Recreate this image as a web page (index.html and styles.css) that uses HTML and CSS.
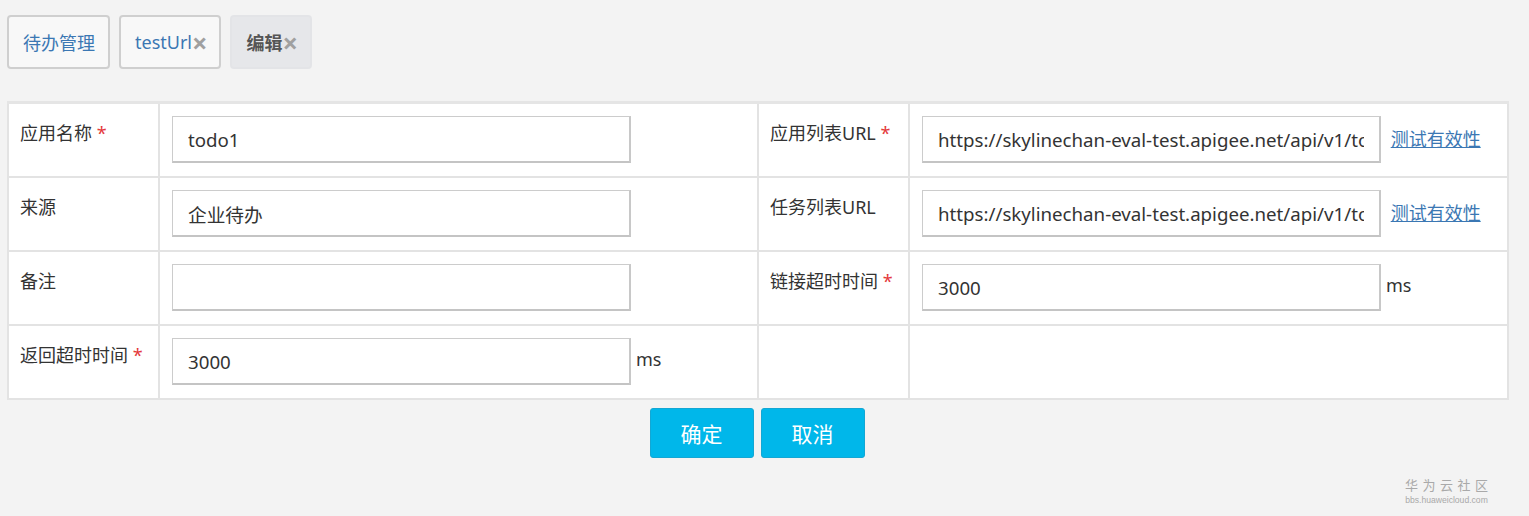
FILE: index.html
```html
<!DOCTYPE html>
<html>
<head>
    <title>编辑</title>
    <link rel="stylesheet" href="styles.css">
</head>
<body>
<div class="page">
    <nav class="tabs">
        <a class="tab">待办管理</a>
        <a class="tab">testUrl<span class="close">×</span></a>
        <a class="tab active">编辑<span class="close">×</span></a>
    </nav>

    <form class="edit-form">
        <table class="form-table">
            <colgroup>
                <col class="col-label">
                <col class="col-field">
                <col class="col-label">
                <col class="col-field">
            </colgroup>
            <tr>
                <th>应用名称 <span class="req">*</span></th>
                <td><input type="text" value="todo1"></td>
                <th>应用列表URL <span class="req">*</span></th>
                <td>
                    <input type="text" value="https://skylinechan-eval-test.apigee.net/api/v1/todo/apps">
                    <a class="check-link">测试有效性</a>
                </td>
            </tr>
            <tr>
                <th>来源</th>
                <td><input type="text" value="企业待办"></td>
                <th>任务列表URL</th>
                <td>
                    <input type="text" value="https://skylinechan-eval-test.apigee.net/api/v1/todo/tasks">
                    <a class="check-link">测试有效性</a>
                </td>
            </tr>
            <tr>
                <th>备注</th>
                <td><input type="text" value=""></td>
                <th>链接超时时间 <span class="req">*</span></th>
                <td><input type="text" value="3000"><span class="unit">ms</span></td>
            </tr>
            <tr>
                <th>返回超时时间 <span class="req">*</span></th>
                <td><input type="text" value="3000"><span class="unit">ms</span></td>
                <th></th>
                <td></td>
            </tr>
        </table>

        <div class="actions">
            <button type="button" class="btn">确定</button>
            <button type="button" class="btn">取消</button>
        </div>
    </form>
</div>

<div class="watermark">
    <div class="wm-title">华为云社区</div>
    <div class="wm-url">bbs.huaweicloud.com</div>
</div>
</body>
</html>
```

FILE: styles.css
```css
:root {
    --bg-color: #f3f3f3;
    --text-color: #333333;
    --border-color: #e3e3e3;
    --input-border: #cccccc;
    --link-color: #3b77b3;
    --primary-color: #00b7ea;
    --primary-border: #13a7d4;
    --required-color: #e4393c;
}

body {
    margin: 0;
    background-color: var(--bg-color);
    color: var(--text-color);
    font-family: "Noto Sans", "Noto Sans CJK SC", sans-serif;
    font-size: 18px;
}

.page {
    padding: 15px 22px 0 7px;
}

/* tabs */
.tabs {
    display: flex;
    gap: 9px;
    height: 54px;
}

.tab {
    display: flex;
    align-items: center;
    padding: 0 13px 0 14px;
    border: 2px solid #cfcfcf;
    border-radius: 4px;
    background-color: #f8f8f8;
    color: var(--link-color);
    font-size: 18px;
    box-sizing: border-box;
}

.tab .close {
    color: #a0a0a0;
    font-size: 27px;
    font-weight: bold;
    line-height: 1;
    margin-top: 1px;
    margin-right: -1px;
}

.tab.active {
    border-color: #e3e4e7;
    background-color: #e6e7ea;
    color: #555;
    font-weight: bold;
}

/* form table */
.edit-form {
    margin-top: 32px;
}

.form-table {
    width: 100%;
    border-collapse: collapse;
    table-layout: fixed;
    background-color: #fff;
    border-top: 3px solid #e5e5e5;
}

.col-label { width: 151px; }
.col-field { width: 599px; }

.form-table th,
.form-table td {
    border: 2px solid var(--border-color);
    height: 74px;
    box-sizing: border-box;
}

.form-table th {
    text-align: left;
    vertical-align: top;
    font-weight: normal;
    padding: 17px 10px 0 11px;
    line-height: 24px;
    white-space: nowrap;
}

.form-table td {
    padding: 12px 12px;
    vertical-align: middle;
    white-space: nowrap;
}

.req {
    color: var(--required-color);
}

.form-table input[type="text"] {
    width: 459px;
    height: 47px;
    padding: 0 15px;
    box-sizing: border-box;
    border: 1px solid var(--input-border);
    border-bottom: 2px solid #c4c4c4;
    border-right: 2px solid #c8c8c8;
    background-color: #fff;
    font-family: inherit;
    font-size: 18.7px;
    color: var(--text-color);
    vertical-align: middle;
}

.check-link {
    margin-left: 5px;
    color: var(--link-color);
    text-decoration: underline;
    vertical-align: middle;
    position: relative;
    top: -2px;
}

.unit {
    margin-left: 5px;
    vertical-align: middle;
    position: relative;
    top: -3px;
}

.actions {
    display: flex;
    justify-content: center;
    gap: 7px;
    margin-top: 8px;
}

.btn {
    width: 104px;
    height: 50px;
    border: 1px solid var(--primary-border);
    border-radius: 3px;
    background-color: var(--primary-color);
    color: #fff;
    font-family: inherit;
    font-size: 21px;
    cursor: pointer;
}

/* watermark over the corner */
.watermark {
    position: absolute;
    right: 41px;
    bottom: 10px;
    color: #a9a9a9;
    text-align: center;
}

.wm-title {
    font-size: 13px;
    letter-spacing: 4.5px;
    margin-right: -4.5px;
    line-height: 17px;
}

.wm-url {
    font-size: 8.6px;
    line-height: 12px;
    font-family: "Liberation Sans", sans-serif;
}
```
